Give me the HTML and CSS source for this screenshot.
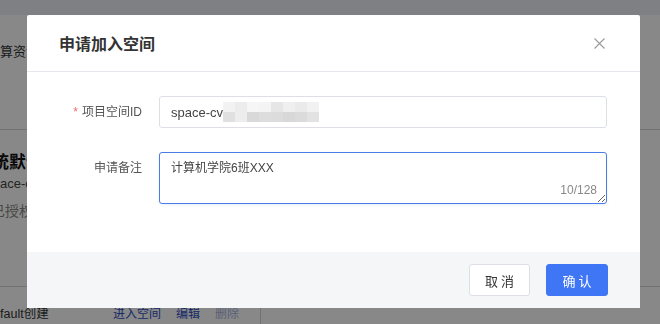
FILE: index.html
```html
<!DOCTYPE html>
<html lang="zh-CN">
<head>
    <meta charset="UTF-8">
    <title>申请加入空间</title>
    <link rel="stylesheet" href="styles.css">
</head>
<body>
    <div class="page">
        <div class="panel">
            <div class="res-row">算资源</div>
            <div class="space-card">
                <div class="space-name">统默认空间</div>
                <div class="space-id">ace-cv9a</div>
                <div class="space-auth">已授权</div>
            </div>
            <div class="table-row">
                <span class="cell-creator">fault创建</span>
                <span class="ops">
                    <span class="op">进入空间</span>
                    <span class="op">编辑</span>
                    <span class="op disabled">删除</span>
                </span>
                <span class="cell-divider"></span>
            </div>
        </div>
    </div>

    <div class="mask"></div>

    <div class="dialog">
        <div class="dialog-header">
            <h2>申请加入空间</h2>
            <svg class="close" width="11" height="11" viewBox="0 0 11 11">
                <path d="M0.5 0.5 L10.5 10.5 M10.5 0.5 L0.5 10.5" stroke="#9a9a9a" stroke-width="1.1" fill="none"/>
            </svg>
        </div>
        <div class="dialog-body">
            <div class="form-row">
                <label class="form-label"><span class="required">*</span>项目空间ID</label>
                <div class="input">
                    <span>space-cv</span>
                    <span class="blur">
                        <i style="background:#f2f2f2"></i><i style="background:#ececec"></i><i style="background:#f6f6f6"></i><i style="background:#f4f4f4"></i><i style="background:#e6e6e6"></i><i style="background:#efefef"></i><i style="background:#eaeaea"></i><i style="background:#f1f1f1"></i>
                        <i style="background:#e0e0e0"></i><i style="background:#ededed"></i><i style="background:#d9d9d9"></i><i style="background:#dddddd"></i><i style="background:#dcdcdc"></i><i style="background:#d8d8d8"></i><i style="background:#dbdbdb"></i><i style="background:#e2e2e2"></i>
                    </span>
                </div>
            </div>
            <div class="form-row">
                <label class="form-label">申请备注</label>
                <div class="textarea-wrap">
                    <textarea class="textarea">计算机学院6班XXX</textarea>
                    <span class="counter">10/128</span>
                </div>
            </div>
        </div>
        <div class="dialog-footer">
            <button class="btn">取 消</button>
            <button class="btn btn-primary">确 认</button>
        </div>
    </div>
</body>
</html>
```

FILE: styles.css
```css
* {
    box-sizing: border-box;
}
body {
    margin: 0;
    font-family: "Liberation Sans", "Noto Sans CJK SC", sans-serif;
    color: #333;
    overflow: hidden;
    height: 324px;
}
.page {
    height: 324px;
    background: #eef0f6;
    padding-top: 15px;
}
.panel {
    background: #fff;
    height: 309px;
    font-size: 13px;
}
.res-row {
    height: 115px;
    padding-top: 26px;
    color: #333;
    border-bottom: 1px solid #d6d6d6;
}
.space-card {
    height: 157px;
    padding-top: 22px;
    border-bottom: 1px solid #d6d6d6;
}
.space-name {
    margin-left: -8px;
    font-size: 17px;
    font-weight: bold;
    color: #111;
    line-height: 22px;
}
.space-id {
    color: #444;
    line-height: 20px;
}
.space-auth {
    margin-left: -9px;
    margin-top: 6px;
    color: #888;
    font-size: 14px;
}
.table-row {
    display: flex;
    align-items: center;
    height: 36px;
    padding-top: 15px;
}
.cell-creator {
    width: 113px;
    font-size: 12.5px;
}
.ops {
    display: flex;
    gap: 15px;
    font-size: 12px;
}
.op {
    color: #2f4fc4;
}
.op.disabled {
    color: #a8b4e0;
}
.cell-divider {
    width: 1px;
    height: 22px;
    background: #d6d6d6;
    margin-left: 21px;
    margin-top: 8px;
}

.mask {
    position: fixed;
    inset: 0;
    background: rgba(0, 0, 0, 0.465);
}

.dialog {
    position: fixed;
    left: 27px;
    top: 15px;
    width: 613px;
    height: 293px;
    background: #fff;
    border-radius: 2px;
    display: flex;
    flex-direction: column;
}
.dialog-header {
    height: 57px;
    padding: 0 35px 0 32px;
    display: flex;
    align-items: center;
    justify-content: space-between;
    border-bottom: 1px solid #e6e6ee;
}
.dialog-header h2 {
    margin: 0;
    font-size: 16px;
    font-weight: bold;
    color: #333;
    font-family: "Noto Sans CJK SC", sans-serif;
}
.close {
    display: block;
}
.dialog-body {
    flex: 1;
    padding: 24px 33px 0 32px;
    display: flex;
    flex-direction: column;
    gap: 24px;
}
.form-row {
    display: flex;
}
.form-label {
    width: 100px;
    padding-right: 17px;
    text-align: right;
    line-height: 32px;
    font-size: 12px;
    color: #555;
}
.required {
    color: #f56c6c;
    margin-right: 4px;
}
.input {
    flex: 1;
    height: 32px;
    border: 1px solid #dcdfe6;
    border-radius: 3px;
    padding: 0 11px;
    display: flex;
    align-items: center;
    font-size: 13px;
    color: #444;
}
.blur {
    display: grid;
    grid-template-columns: repeat(8, 12px);
    grid-template-rows: 10px 10px;
}
.blur i {
    display: block;
}
.textarea-wrap {
    flex: 1;
    position: relative;
}
.textarea {
    display: block;
    width: 100%;
    height: 52px;
    border: 1px solid #4a7be6;
    border-radius: 3px;
    padding: 6px 11px;
    font-family: "Liberation Sans", "Noto Sans CJK SC", sans-serif;
    font-size: 12px;
    line-height: 18px;
    color: #444;
    outline: none;
    box-shadow: 0 1px 3px rgba(74, 123, 230, 0.12);
}
.counter {
    position: absolute;
    right: 10px;
    bottom: 7px;
    font-size: 12px;
    line-height: 14px;
    color: #888;
}
.dialog-footer {
    height: 56px;
    background: #f5f6f8;
    padding: 12px 32px 12px 0;
    display: flex;
    justify-content: flex-end;
    gap: 16px;
}
.btn {
    height: 32px;
    width: 61px;
    border: 1px solid #dcdfe6;
    border-radius: 3px;
    background: #fff;
    color: #333;
    font-size: 13px;
    font-family: "Noto Sans CJK SC", sans-serif;
    padding: 0;
}
.btn-primary {
    width: 62px;
    background: #3f76f5;
    border-color: #3f76f5;
    color: #fff;
}
```
